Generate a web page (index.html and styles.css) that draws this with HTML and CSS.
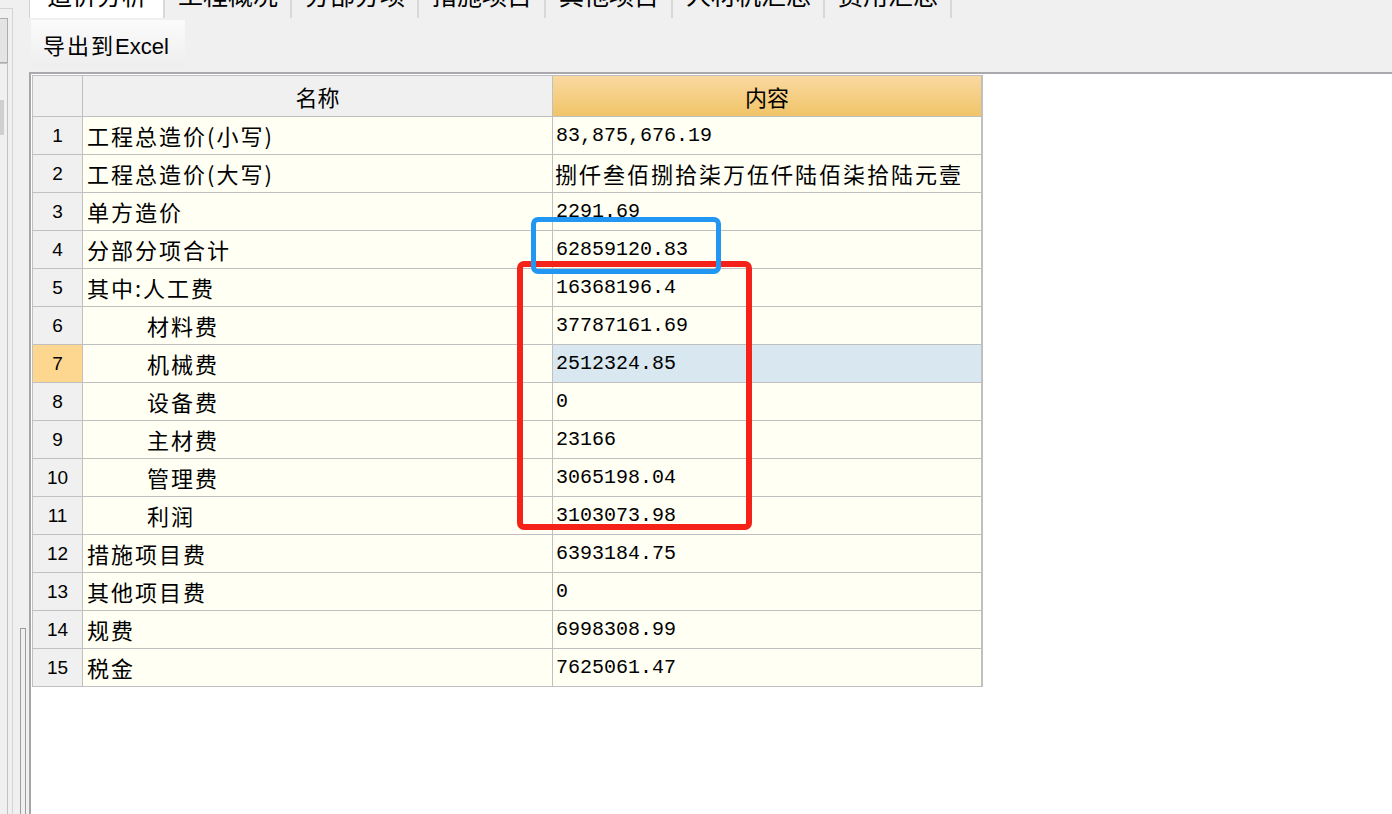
FILE: index.html
```html
<!DOCTYPE html>
<html lang="zh-CN">
<head>
<meta charset="utf-8">
<title>造价分析</title>
<link rel="stylesheet" href="styles.css">
</head>
<body>
<div class="app">
  <aside class="side">
    <div class="side-panel">
      <div class="side-box1"></div>
      <div class="side-box2"><div class="side-thumb"></div></div>
    </div>
    <div class="side-scroll"><div class="side-track"></div></div>
  </aside>
  <main class="main">
    <nav class="tabs">
      <div class="tab active">造价分析</div>
      <div class="tab">工程概况</div>
      <div class="tab">分部分项</div>
      <div class="tab">措施项目</div>
      <div class="tab">其他项目</div>
      <div class="tab">人材机汇总</div>
      <div class="tab">费用汇总</div>
    </nav>
    <div class="toolbar">
      <button class="btn"><span class="btn-cn">导出到</span>Excel</button>
    </div>
    <div class="content">
      <div class="grid">
        <div class="hd corner"></div>
        <div class="hd">名称</div>
        <div class="hd hd-sel">内容</div>

        <div class="num">1</div><div class="name">工程总造价(小写)</div><div class="val">83,875,676.19</div>
        <div class="num">2</div><div class="name">工程总造价(大写)</div><div class="val cn">捌仟叁佰捌拾柒万伍仟陆佰柒拾陆元壹</div>
        <div class="num">3</div><div class="name">单方造价</div><div class="val">2291.69</div>
        <div class="num">4</div><div class="name">分部分项合计</div><div class="val">62859120.83</div>
        <div class="num">5</div><div class="name">其中:人工费</div><div class="val">16368196.4</div>
        <div class="num">6</div><div class="name ind">材料费</div><div class="val">37787161.69</div>
        <div class="num num-sel">7</div><div class="name ind">机械费</div><div class="val val-sel">2512324.85</div>
        <div class="num">8</div><div class="name ind">设备费</div><div class="val">0</div>
        <div class="num">9</div><div class="name ind">主材费</div><div class="val">23166</div>
        <div class="num">10</div><div class="name ind">管理费</div><div class="val">3065198.04</div>
        <div class="num">11</div><div class="name ind">利润</div><div class="val">3103073.98</div>
        <div class="num">12</div><div class="name">措施项目费</div><div class="val">6393184.75</div>
        <div class="num">13</div><div class="name">其他项目费</div><div class="val">0</div>
        <div class="num">14</div><div class="name">规费</div><div class="val">6998308.99</div>
        <div class="num">15</div><div class="name">税金</div><div class="val">7625061.47</div>
      </div>
    </div>
  </main>
</div>
<div class="mark mark-red"></div>
<div class="mark mark-blue"></div>
</body>
</html>
```

FILE: styles.css
```css
html, body {
  margin: 0;
  padding: 0;
  height: 100%;
  overflow: hidden;
}

body {
  position: relative;
  background: #f0f0f0;
  color: #000;
  font-family: "Noto Sans CJK SC", "Liberation Sans", sans-serif;
}

.app {
  display: flex;
  height: 814px;
}

/* left strip */
.side {
  width: 29px;
  flex-shrink: 0;
  display: flex;
}

.side-panel {
  width: 12px;
  margin-top: 8px;
  padding-top: 9px;
  border-top: 1px solid #d4d4d4;
  border-right: 1px solid #d4d4d4;
  display: flex;
  flex-direction: column;
}

.side-box1 {
  width: 7px;
  height: 43px;
  border: 1px solid #adadad;
  border-left: 0;
  background: #e4e4e4;
}

.side-box2 {
  flex: 1;
  width: 7px;
  padding-top: 36px;
  border-top: 1px solid #c2c2c2;
  border-right: 1px solid #c2c2c2;
}

.side-thumb {
  width: 4px;
  height: 35px;
  background: #cfcfcf;
}

.side-scroll {
  flex: 1;
  padding-left: 7px;
  padding-top: 628px;
}

.side-track {
  width: 4px;
  height: 200px;
  border: 1px solid #9c9c9c;
  border-bottom: 0;
}

/* main column */
.main {
  flex: 1;
  min-width: 0;
  display: flex;
  flex-direction: column;
}

.tabs {
  display: flex;
  height: 44px;
  margin-top: -26px;
  flex-shrink: 0;
}

.tab {
  box-sizing: border-box;
  height: 44px;
  line-height: 40px;
  padding: 0 12px 0 13px;
  font-size: 25px;
  white-space: nowrap;
  border-right: 2px solid #d8d8d8;
}

.tab.active {
  background: #fff;
  border-left: 1px solid #d0d0d0;
  padding: 0 16px 0 17px;
}

.toolbar {
  height: 54px;
  flex-shrink: 0;
  box-sizing: border-box;
  padding: 2px 0 0 2px;
}

.btn {
  width: 154px;
  height: 47px;
  border: 0;
  margin: 0;
  padding: 0 0 0 12px;
  text-align: left;
  background: linear-gradient(#fbfbfb, #eeeeee);
  font-family: "Liberation Sans", "Noto Sans CJK SC", sans-serif;
  font-size: 22px;
  color: #000;
}

.btn-cn {
  font-family: "Noto Sans CJK SC", sans-serif;
  letter-spacing: 2px;
}

.content {
  flex: 1;
  background: #fff;
  border-top: 2px solid #aaaaae;
  border-left: 2px solid #a6a6a6;
  padding: 1px 0 0 1px;
}

/* data grid */
.grid {
  display: grid;
  grid-template-columns: 50px 470px 429px;
  grid-template-rows: 41px;
  grid-auto-rows: 38px;
  width: max-content;
  border-top: 1px solid #c0c0c0;
  border-left: 1px solid #c0c0c0;
  border-right: 1px solid #c0c0c0;
}

.grid > div {
  box-sizing: border-box;
  border-right: 1px solid #c0c0c0;
  border-bottom: 1px solid #c0c0c0;
  white-space: nowrap;
  overflow: hidden;
}

.hd {
  line-height: 40px;
  background: #f0f0f0;
  text-align: center;
  font-size: 22px;
}

.hd-sel {
  background: linear-gradient(#fad9a1, #f1c468);
}

.num {
  background: #f0f0f0;
  text-align: center;
  line-height: 37px;
  font-family: "Liberation Sans", sans-serif;
  font-size: 19px;
}

.num-sel {
  background: #fdd690;
}

.name {
  background: #fffff4;
  line-height: 37px;
  padding-left: 4px;
  font-size: 22px;
  letter-spacing: 2px;
}

.name.ind {
  padding-left: 64px;
}

.val {
  background: #fffff4;
  line-height: 38px;
  padding-left: 3px;
  font-family: "Liberation Mono", "Noto Sans CJK SC", monospace;
  font-size: 20px;
}

.val.cn {
  line-height: 37px;
  padding-left: 2px;
  font-family: "Noto Sans CJK SC", sans-serif;
  font-size: 22px;
  letter-spacing: 2px;
}

.val-sel {
  background: #d9e8f0;
}

/* annotation marks drawn over the grid */
.mark {
  position: absolute;
  box-sizing: border-box;
  border-radius: 7px;
}

.mark-red {
  left: 517px;
  top: 261px;
  width: 235px;
  height: 269px;
  border: 6px solid #f52219;
}

.mark-blue {
  left: 531px;
  top: 217px;
  width: 190px;
  height: 57px;
  border: 5px solid #2196f3;
}
```
